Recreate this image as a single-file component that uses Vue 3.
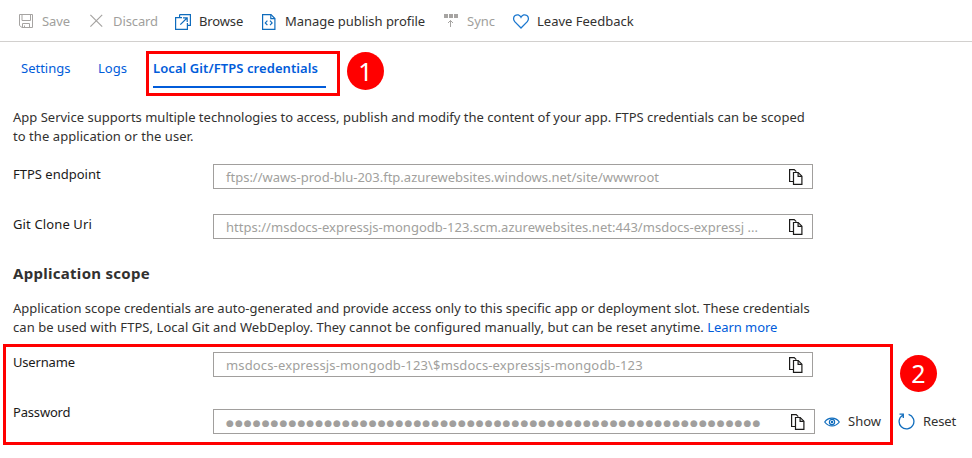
<script setup>
import { h } from 'vue'

const CopyIcon = () =>
  h('svg', { class: 'copy-icon', width: 16, height: 16, viewBox: '0 0 16 16', fill: 'none', stroke: '#1b1a19', 'stroke-width': 1.2 }, [
    h('path', { d: 'M5 12.5H1.6V.6H6.2L8.3 2.7' }),
    h('path', { d: 'M5.5 3.5H10.2L13.9 7.2V15.4H5.5Z', fill: '#fff' }),
    h('path', { d: 'M10.1 3.6V7.3H13.8' }),
  ])

const dots = '●'.repeat(60)
</script>

<template>
  <main class="page">
    <nav class="toolbar">
      <button class="cmd off">
        <svg width="16" height="16" viewBox="0 0 16 16" fill="none" stroke="#a6a4a2">
          <path d="M.5 .5H13.5V13.5H3L.5 11.5Z" />
          <path d="M3 .5V6.5H11.5V.5M3.5 13.5V9.5H10.5V13.5M5.5 11.5V13.5" />
        </svg>
        <span class="t-save">Save</span>
      </button>
      <button class="cmd off">
        <svg width="16" height="16" viewBox="0 0 16 16" fill="none" stroke="#a6a4a2" stroke-width="1.2">
          <path d="M.4 .8L12.2 12.6M12.2 .8L.4 12.6" />
        </svg>
        <span class="t-discard">Discard</span>
      </button>
      <button class="cmd browse">
        <svg width="16" height="16" viewBox="0 0 16 16" fill="none" stroke="#0f6cbd" stroke-width="1.2">
          <path d="M4.6 .6H15.4V11.4H12.4M4.6 .6V3.6" />
          <path d="M7 3.6H.6V15.4H12.4V9" />
          <path d="M5.3 10.7L12 4M8 3.8H12.2V8" />
        </svg>
        <span class="t-browse">Browse</span>
      </button>
      <button class="cmd">
        <svg width="16" height="16" viewBox="0 0 16 16" fill="none" stroke="#0f6cbd" stroke-width="1.2">
          <path d="M.6 .6H9L12.9 4.5V15.4H.6Z" />
          <path d="M8.8 .8V4.7H12.8M5.4 6.7L3.3 8.9L5.4 11.1M8 6.7L10.1 8.9L8 11.1" />
        </svg>
        <span class="t-manage">Manage publish profile</span>
      </button>
      <button class="cmd off">
        <svg width="16" height="16" viewBox="0 0 16 16" fill="none" stroke="#a6a4a2">
          <path d="M0 0H4V4H0ZM5 0H9V4H5ZM10 0H14V4H10Z" fill="#a6a4a2" stroke="none" />
          <path d="M6.5 6.5V13M4 9L6.5 6.5L9 9" />
        </svg>
        <span>Sync</span>
      </button>
      <button class="cmd">
        <svg width="17" height="16" viewBox="0 0 17 16" fill="none" stroke="#1b77cf" stroke-width="1.3">
          <path d="M8 14L1.7 7.6C-.1 5.7 .4 2.7 2.1 1.5C4.2 .1 6.6 .8 8 3.3C9.4 .8 11.8 .1 13.9 1.5C15.6 2.7 16.1 5.7 14.3 7.6Z" />
        </svg>
        <span>Leave Feedback</span>
      </button>
    </nav>

    <div class="tabs">
      <a class="tab">Settings</a>
      <a class="tab">Logs</a>
      <a class="tab active">Local Git/FTPS credentials</a>
    </div>

    <p class="intro">
      App Service supports multiple technologies to access, publish and modify the content of your app. FTPS credentials can be scoped<br />
      <span class="loose">to the application or the user.</span>
    </p>

    <div class="row">
      <label>FTPS endpoint</label>
      <div class="field"><span>ftps://waws-prod-blu-203.ftp.azurewebsites.windows.net/site/wwwroot</span><CopyIcon /></div>
    </div>
    <div class="row">
      <label class="t-git">Git Clone Uri</label>
      <div class="field"><span class="t-uri">https://msdocs-expressjs-mongodb-123.scm.azurewebsites.net:443/msdocs-expressj ...</span><CopyIcon /></div>
    </div>

    <h2>Application scope</h2>
    <p class="scope">
      Application scope credentials are auto-generated and provide access only to this specific app or deployment slot. These credentials<br />
      <span class="loose">can be used with FTPS, Local Git and WebDeploy. They cannot be configured manually, but can be reset anytime. </span><a class="link">Learn more</a>
    </p>

    <div class="row">
      <label class="t-name">Username</label>
      <div class="field"><span class="t-user">msdocs-expressjs-mongodb-123\$msdocs-expressjs-mongodb-123</span><CopyIcon /></div>
    </div>
    <div class="row secret">
      <label class="t-name">Password</label>
      <div class="field wide"><span class="dots">{{ dots }}</span><CopyIcon /></div>
      <button class="action show">
        <svg width="16" height="10" viewBox="0 0 16 10" fill="none" stroke="#0f6cbd" stroke-width="1.2">
          <path d="M.7 5C4.3-.2 11.7-.2 15.3 5C11.7 10.2 4.3 10.2 .7 5Z" />
          <circle cx="8" cy="5" r="2.6" />
          <circle cx="8" cy="5" r=".6" />
        </svg>
        <span>Show</span>
      </button>
      <button class="action reset">
        <svg width="17" height="17" viewBox="0 0 17 17" fill="none" stroke="#0f6cbd" stroke-width="1.3">
          <path d="M10.6 1.4A7.4 7.4 0 1 1 4.6 2.2M1.5 1.2H5.3V5" />
        </svg>
        <span class="t-reset">Reset</span>
      </button>
    </div>

    <div class="outline first"></div>
    <div class="outline second"></div>
    <div class="badge one">1</div>
    <div class="badge two">2</div>
  </main>
</template>

<style>
body { background: #fff; }
</style>

<style scoped>
.page {
  position: relative;
  box-sizing: border-box;
  width: 972px;
  height: 458px;
  overflow: hidden;
  background: #fff;
  color: #323130;
  font: 13px/19px "Noto Sans", "Open Sans", sans-serif;
}
button {
  display: flex;
  align-items: center;
  padding: 0;
  border: 0;
  background: none;
  color: inherit;
  font: inherit;
  white-space: nowrap;
}
.toolbar {
  display: grid;
  grid-template-columns: 71px 85px 87px 182px 69px 1fr;
  height: 41px;
  padding: 2px 0 0 19px;
  box-sizing: border-box;
  border-bottom: 0;
  box-shadow: 0 1px #d2d0ce;
}
.cmd svg { flex: none; margin: 1px 7px 0 0; overflow: visible; }
.cmd.browse svg { margin-right: 8px; }
.off { color: #a19f9d; }
.tabs {
  display: grid;
  grid-template-columns: 77px 55px 173px;
  height: 46px;
  margin-top: 1px;
  padding: 17px 0 0 21px;
  box-sizing: border-box;
  color: #015cda;
}
.tab { white-space: nowrap; }
.tab.active { height: 27px; border-bottom: 2px solid #015cda; font-weight: 600; letter-spacing: .077px; }
p { margin: 0; padding-left: 13px; white-space: nowrap; }
.intro { height: 56px; padding-top: 20px; }
.loose { letter-spacing: .06px; }
.row { display: flex; align-items: flex-start; height: 50px; padding-left: 13px; }
label { width: 200px; line-height: 20px; color: #1b1a19; }
.field {
  display: flex;
  align-items: center;
  justify-content: space-between;
  width: 600px;
  height: 25px;
  box-sizing: border-box;
  padding: 0 8px 0 12px;
  border: 1px solid #a19f9d;
  color: #a19f9d;
  white-space: nowrap;
}
.field.wide { width: 602px; }
.field > span { padding-top: 2px; }
.field svg { flex: none; }
.dots { font: 9px/20px "DejaVu Sans", sans-serif; letter-spacing: 1.07px; }
h2 { height: 36px; margin: 0; padding: 0 0 0 13px; font-size: 15px; line-height: 20px; font-weight: 700; letter-spacing: .29px; }
.row + h2 { margin-top: -1px; }
.scope { height: 53px; }
.link { color: #015cda; letter-spacing: -.07px; }
.secret .field, .secret .action { margin-top: 7px; }
.action { height: 25px; }
.show { width: 74px; padding-left: 9px; box-sizing: border-box; }
.show svg { margin-right: 8px; }
.reset { padding-left: 9px; }
.reset svg { margin-right: 8px; }
.t-save, .t-discard { letter-spacing: -.1px; }
.t-browse, .t-reset { letter-spacing: -.14px; }
.t-manage { letter-spacing: -.04px; }
.t-git { letter-spacing: .13px; }
.t-uri { letter-spacing: .02px; }
.t-user { letter-spacing: .15px; }
.t-name { letter-spacing: -.18px; }
.outline { position: absolute; box-sizing: border-box; border: 3px solid #f00; pointer-events: none; }
.outline.first { left: 146px; top: 51px; width: 194px; height: 45px; }
.outline.second { left: 3px; top: 344px; width: 890px; height: 101px; }
.badge {
  position: absolute;
  width: 37px;
  height: 37px;
  border-radius: 50%;
  background: #f00;
  color: #fff;
  font: 25px/37px "Noto Sans", sans-serif;
  text-align: center;
}
.badge.one { left: 347px; top: 52px; height: 38px; line-height: 39px; }
.badge.two { left: 900px; top: 355px; }
</style>
